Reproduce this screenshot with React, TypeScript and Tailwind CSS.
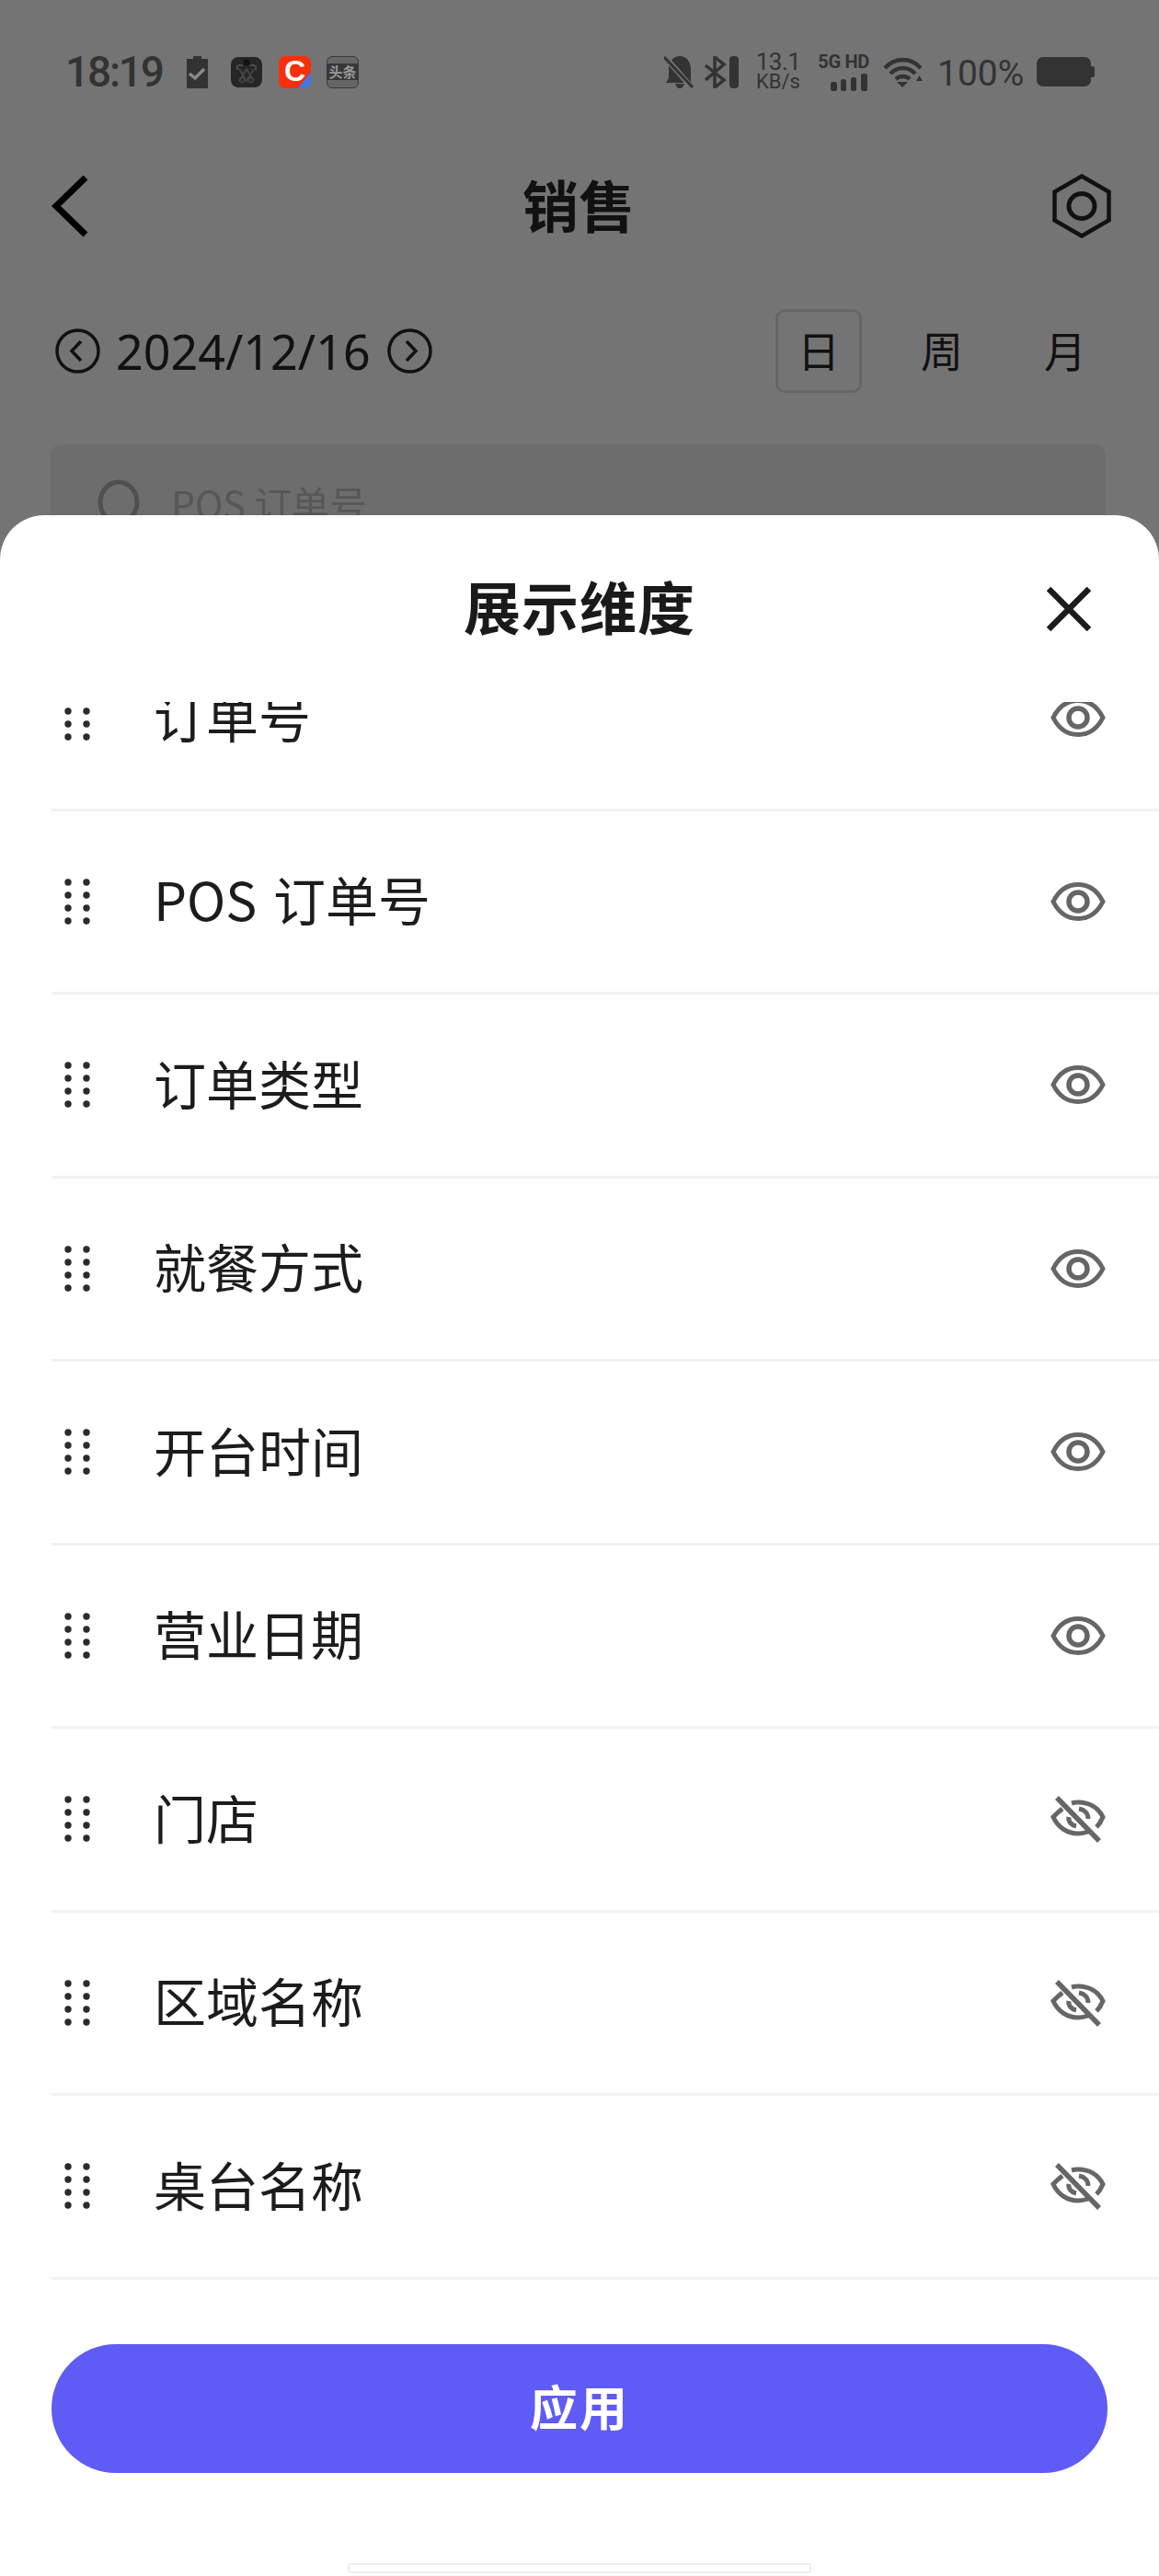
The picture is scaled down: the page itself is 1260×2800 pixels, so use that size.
const cjk = "font-['Noto_Sans_CJK_SC','Noto_Sans',sans-serif]";
const roboto = "font-['Roboto',sans-serif]";

const rows = [
  { label: "订单号", visible: true },
  { label: "POS 订单号", visible: true },
  { label: "订单类型", visible: true },
  { label: "就餐方式", visible: true },
  { label: "开台时间", visible: true },
  { label: "营业日期", visible: true },
  { label: "门店", visible: false },
  { label: "区域名称", visible: false },
  { label: "桌台名称", visible: false },
];

function Grip() {
  return (
    <svg width="42" height="56" viewBox="0 0 42 56" className="shrink-0">
      {[7, 21, 35, 49].map((y) => (
        <g key={y} fill="#2b2b2b">
          <circle cx="18" cy={y} r="3.700" />
          <circle cx="38" cy={y} r="3.700" />
        </g>
      ))}
    </svg>
  );
}

function Eye({ off }: { off?: boolean }) {
  return (
    <svg width="60" height="60" viewBox="0 0 60 60" fill="none" stroke="#666666" strokeWidth="5" className="shrink-0">
      {off ? (
        <>
          <path d="M23 13c2.500-.7 5-1 7-1 12 0 22 6 27 16-2 5-4 8-7 11" />
          <path d="M13 19c-4 3-7 6-10 9 5 11 15 18 27 18 4 0 8-1 11-2" />
          <path d="M31 19c6 1 10 5 10 11M20 28c-1 5 3 9 8 10" />
          <path d="M7 7l46 47" strokeWidth="5.500" />
        </>
      ) : (
        <>
          <path d="M3 30C9 18 18 11.500 30 11.500S51 18 57 30c-6 12-15 18.500-27 18.500S9 42 3 30z" />
          <circle cx="30" cy="30" r="10" strokeWidth="5.500" />
        </>
      )}
    </svg>
  );
}

function StatusBar() {
  return (
    <div className="flex h-[156px] items-center justify-between pl-[71px] pr-[70px] text-[#333333]">
      <div className="flex items-center">
        <span className={`${roboto} w-[107px] text-[46px] font-medium leading-none tracking-[-2.200px]`}>18:19</span>
        <svg width="25" height="35" viewBox="0 0 25 35" className="ml-[24px]">
          <path d="M1 3h7V0h9v3h7v32H1z" fill="#333333" />
          <path d="M4 19l6 5 10-10" stroke="#8a8a8a" strokeWidth="3.500" fill="none" />
        </svg>
        <svg width="34" height="33" viewBox="0 0 34 33" className="ml-[24px]">
          <rect width="34" height="33" rx="8" fill="#262626" />
          <path d="M8 9h5M21 9h5M7 9v5M27 9v5" stroke="#4a4a4a" strokeWidth="2" fill="none" />
          <path d="M9 13l8 13 8-13M9 26l8-13 8 13" stroke="#444444" strokeWidth="2" fill="none" />
          <circle cx="17" cy="6" r="3.500" fill="#111111" />
          <circle cx="12" cy="25" r="2.500" fill="none" stroke="#444444" strokeWidth="1.500" />
          <circle cx="22" cy="25" r="2.500" fill="none" stroke="#444444" strokeWidth="1.500" />
        </svg>
        <div className="relative ml-[18px] flex h-[35px] w-[35px] items-center justify-center overflow-hidden rounded-[7px] bg-[#f5300a] font-['Liberation_Sans',sans-serif] text-[32px] font-bold leading-none text-white">
          <span className="-mt-[2px]">C</span>
          <svg width="14" height="18" viewBox="0 0 14 18" className="absolute bottom-0 right-0">
            <path d="M14 0v18H0z" fill="#3f78e8" />
          </svg>
        </div>
        <div className="ml-[17px] flex h-[35px] w-[35px] flex-col justify-center rounded-[6px] border border-[#3a3a3a] bg-[#666666]">
          <span className={`${cjk} whitespace-nowrap bg-[#383838] text-center text-[15px] font-bold leading-[18px] text-[#9a9a9a]`}>头条</span>
        </div>
      </div>
      <div className="flex items-center">
        <svg width="32" height="35" viewBox="0 0 32 35">
          <path d="M2 29l3-5V14C5 6 10 0 17 0c7 0 12 6 12 14v15z" fill="#333333" />
          <path d="M12 30c1 3 3 5 5 5s4-2 5-5z" fill="#333333" />
          <path d="M2 2l28 32" stroke="#747474" strokeWidth="6" />
          <path d="M0 1l31 33" stroke="#333333" strokeWidth="3" />
        </svg>
        <svg width="37" height="35" viewBox="0 0 37 35" className="ml-[12px]">
          <path d="M1 10l20 16-10 8V1l10 8L1 26" fill="none" stroke="#333333" strokeWidth="3.500" />
          <rect x="27" y="0" width="10" height="35" rx="4" fill="#333333" />
        </svg>
        <div className={`${roboto} ml-[19px] flex w-[48px] flex-col items-center`}>
          <span className="text-[26px] leading-[22px] tracking-[-0.500px]">13.1</span>
          <span className="text-[22px] leading-[22px]">KB/s</span>
        </div>
        <div className={`${roboto} ml-[18px] flex w-[57px] flex-col items-end`}>
          <span className="whitespace-nowrap text-[20px] font-bold leading-[20px] tracking-[-0.300px]">5G HD</span>
          <svg width="40" height="19" viewBox="0 0 40 19" className="mr-[2px] mt-[3px]">
            <rect x="0" y="9" width="7" height="10" rx="2.500" fill="#333333" />
            <rect x="11" y="6" width="6" height="13" rx="2.500" fill="#333333" />
            <rect x="22" y="4" width="6" height="15" rx="2.500" fill="#333333" />
            <rect x="33" y="0" width="7" height="19" rx="2.500" fill="#333333" />
          </svg>
        </div>
        <svg width="43" height="34" viewBox="0 0 43 34" className="ml-[15px]">
          <path d="M2 13C13 1 30 1 41 13M8 19c8-8 19-8 27 0M14 25c4-4 11-4 15 0" stroke="#333333" strokeWidth="4.500" fill="none" />
          <path d="M15 28h12l-6 6z" fill="#333333" />
          <path d="M36 27h7l-3.500-6z" fill="#333333" />
        </svg>
        <span className={`${roboto} ml-[16px] mt-[4px] w-[95px] whitespace-nowrap text-[39px] leading-none`}>100%</span>
        <div className="ml-[13px] flex items-center">
          <div className="h-[32px] w-[59px] rounded-[7px] bg-[#333333]" />
          <div className="h-[12px] w-[4px] rounded-r-[2px] bg-[#333333]" />
        </div>
      </div>
    </div>
  );
}

export default function App() {
  return (
    <div className="relative h-[2800px] w-[1260px] overflow-hidden bg-[#747474]">
      <StatusBar />
      <div className="grid h-[136px] grid-cols-[1fr_auto_1fr] items-center pl-[56px] pr-[52px]">
        <svg width="40" height="68" viewBox="0 0 40 68" fill="none" stroke="#000000" strokeWidth="7">
          <path d="M37 3L5 34l32 31" />
        </svg>
        <span className={`${cjk} mb-[6px] mr-[6px] text-[61px] font-bold leading-none text-[#111111]`}>销售</span>
        <svg width="64" height="70" viewBox="0 0 64 70" fill="none" stroke="#111111" strokeWidth="4.500" className="justify-self-end">
          <path d="M32 2.500l29.500 17v31L32 67.500 2.500 50.500v-31z" />
          <ellipse cx="32" cy="35" rx="14" ry="13.500" strokeWidth="5" />
        </svg>
      </div>
      <div className="mt-[44px] flex items-center justify-between pl-[60px] pr-[55px]">
        <div className="flex items-center">
          <DateArrow dir="left" />
          <span className="ml-[17px] font-['Noto_Sans',sans-serif] text-[52px] leading-none text-[#111111]">2024/12/16</span>
          <DateArrow dir="right" className="ml-[18px]" />
        </div>
        <div className={`${cjk} flex items-center gap-[40px] text-[46px] leading-none text-[#111111]`}>
          <div className="flex h-[91px] w-[94px] items-center justify-center rounded-[10px] border-[3px] border-[#666666] pb-[5px]">日</div>
          <div className="w-[94px] pb-[5px] text-center">周</div>
          <div className="w-[94px] pb-[5px] text-center">月</div>
        </div>
      </div>
      <div className="ml-[55px] mr-[58px] mt-[56px] flex h-[120px] items-start rounded-[12px] bg-[#6d6d6d] pl-[51px] pt-[38px]">
        <svg width="46" height="50" viewBox="0 0 46 50" fill="none" stroke="#505050" strokeWidth="5">
          <ellipse cx="23" cy="25" rx="20" ry="22" />
        </svg>
        <span className={`${cjk} -mt-[3px] ml-[34px] text-[41px] leading-[56px] text-[#575757]`}>POS 订单号</span>
      </div>

      {/* bottom sheet */}
      <div className="absolute inset-x-0 bottom-0 top-[560px] overflow-hidden rounded-t-[48px] bg-white">
        <div className="relative flex h-[203px] items-start justify-center pt-[67px]">
          <span className={`${cjk} text-[62px] font-bold leading-none tracking-[1px] text-[#1a1a1a]`}>展示维度</span>
          <svg width="48" height="48" viewBox="0 0 48 48" className="absolute right-[74px] top-[78px]" fill="none" stroke="#1c1c1c" strokeWidth="6.500">
            <path d="M2 2l44 44M46 2L2 46" />
          </svg>
        </div>
        <div className="h-[1715px] overflow-hidden">
          <div className="-mt-[81px]">
            {rows.map((r) => (
              <Row key={r.label} label={r.label} visible={r.visible} />
            ))}
          </div>
        </div>
        <div className="absolute inset-x-[56px] top-[1988px] flex h-[140px] items-center justify-center rounded-full bg-[#5f5bf5] pb-[6px]">
          <span className={`${cjk} text-[52px] font-bold leading-none tracking-[2px] text-white`}>应用</span>
        </div>
        <div className="absolute left-[378px] top-[2226px] h-[11px] w-[504px] rounded-[3px] border-2 border-[#eeeeee]" />
      </div>
    </div>
  );
}

function Row({ label, visible }: { label: string; visible: boolean }) {
  return (
    <div className="ml-[56px] flex h-[199.500px] items-center justify-between border-b-[3px] border-[#f2f2f2] pr-[58px]">
      <div className="flex items-center">
        <Grip />
        <span className={`${cjk} ml-[69px] pb-[6px] text-[57px] leading-none text-[#1c1c1c] [word-spacing:5px]`}>{label}</span>
      </div>
      <Eye off={!visible} />
    </div>
  );
}

function DateArrow({ dir, className }: { dir: "left" | "right"; className?: string }) {
  return (
    <svg width="49" height="49" viewBox="0 0 49 49" fill="none" stroke="#111111" strokeWidth="3.500" className={className}>
      <circle cx="24.500" cy="24.500" r="22.500" />
      <path d={dir === "left" ? "M28 14L18 24.500 28 35" : "M21 14l10 10.500L21 35"} />
    </svg>
  );
}
